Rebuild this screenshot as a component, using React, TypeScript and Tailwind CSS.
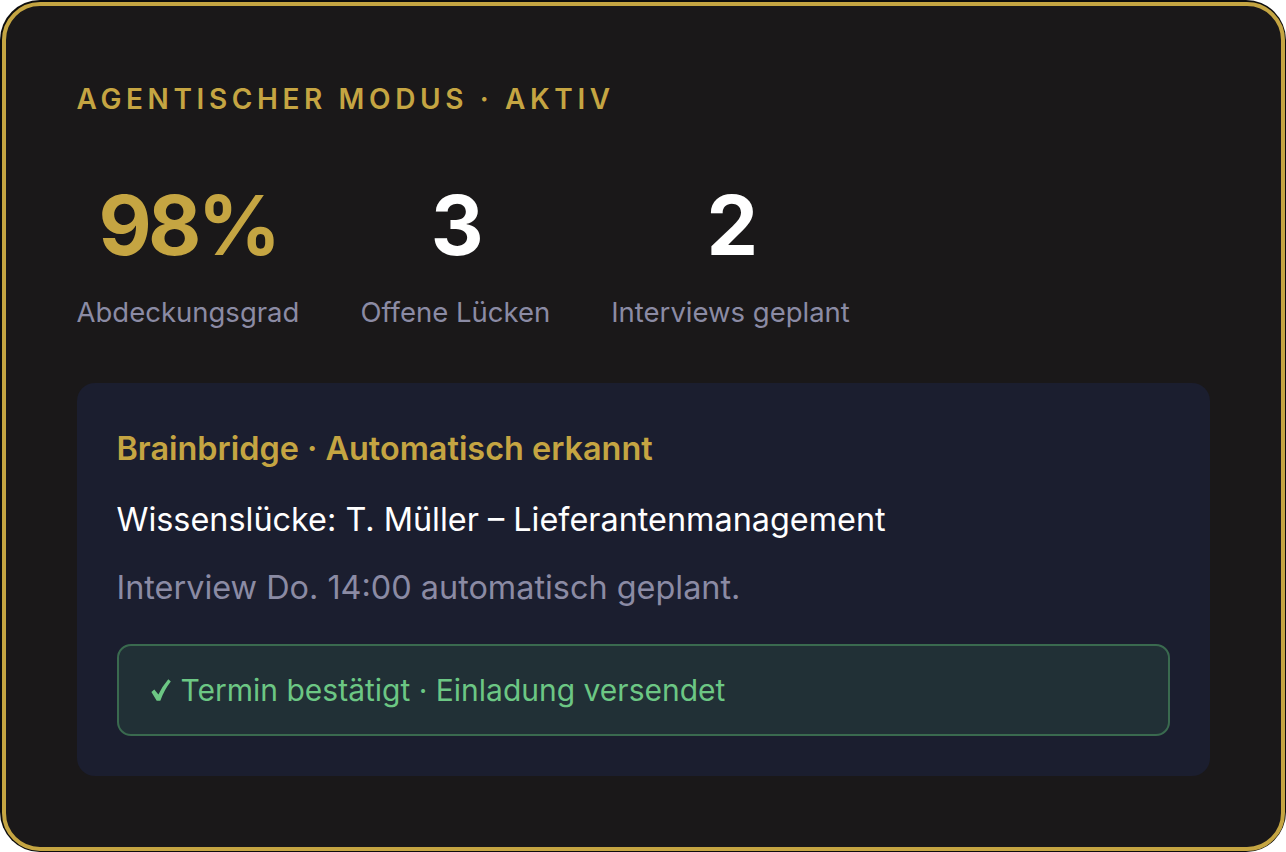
export default function App() {
  const stats = [
    { value: "98%", label: "Abdeckungsgrad", gold: true },
    { value: "3", label: "Offene Lücken", gold: false },
    { value: "2", label: "Interviews geplant", gold: false },
  ];

  return (
    <div className="h-[852px] w-[1286px] bg-white font-['Inter',sans-serif]">
      <div className="h-full w-full rounded-[40px] bg-[#0d0d0d] p-[1.5px]">
        <div className="h-full w-full rounded-[38px] border-[4px] border-[#c5a542] bg-[#1a1819] pl-[71px] pr-[71px] pt-[79.5px]">
          <div className="text-[28px] font-semibold uppercase leading-none tracking-[0.165em] text-[#c5a542]">
            Agentischer Modus · Aktiv
          </div>

          <div className="mt-[72px] flex gap-[61px]">
            {stats.map((s) => (
              <div key={s.label} className="flex flex-col items-center">
                <div
                  className={
                    s.gold
                      ? "text-[82px] font-bold leading-none tracking-[-0.045em] text-[#c5a542]"
                      : "text-[82px] font-bold leading-none tracking-[-0.045em] text-white"
                  }
                >
                  {s.value}
                </div>
                <div className="mt-[32px] text-[27.5px] leading-none text-[#8b8ba4]">{s.label}</div>
              </div>
            ))}
          </div>

          <div className="mt-[56px] rounded-[18px] bg-[#1b1e2f] px-[40px] pb-[40px] pt-[50px]">
            <div className="text-[32.4px] font-semibold leading-none text-[#c5a542]">
              Brainbridge · Automatisch erkannt
            </div>
            <div className="mt-[38.6px] text-[32.4px] leading-none text-white">
              Wissenslücke: T. Müller – Lieferantenmanagement
            </div>
            <div className="mt-[35.6px] text-[32.4px] leading-none text-[#8b8ba4]">
              Interview Do. 14:00 automatisch geplant.
            </div>
            <div className="mt-[40px] flex h-[92px] items-center rounded-[14px] border-2 border-[#3a6a4f] bg-[#213036] pl-[32px] pr-[30px] text-[30px] leading-none text-[#6cc784]">
              {/* check glyph */}
              <svg viewBox="0 0 20 22" className="mr-[10px] h-[22px] w-[20px] shrink-0 fill-current">
                <path d="M0.4 12.9 L3.3 10.5 L7.4 15.6 Q11.2 7.4 17.3 0.3 L19.8 2.5 Q13.3 10.7 9.3 21.7 L5.7 21.7 Z" />
              </svg>
              Termin bestätigt · Einladung versendet
            </div>
          </div>
        </div>
      </div>
    </div>
  );
}
